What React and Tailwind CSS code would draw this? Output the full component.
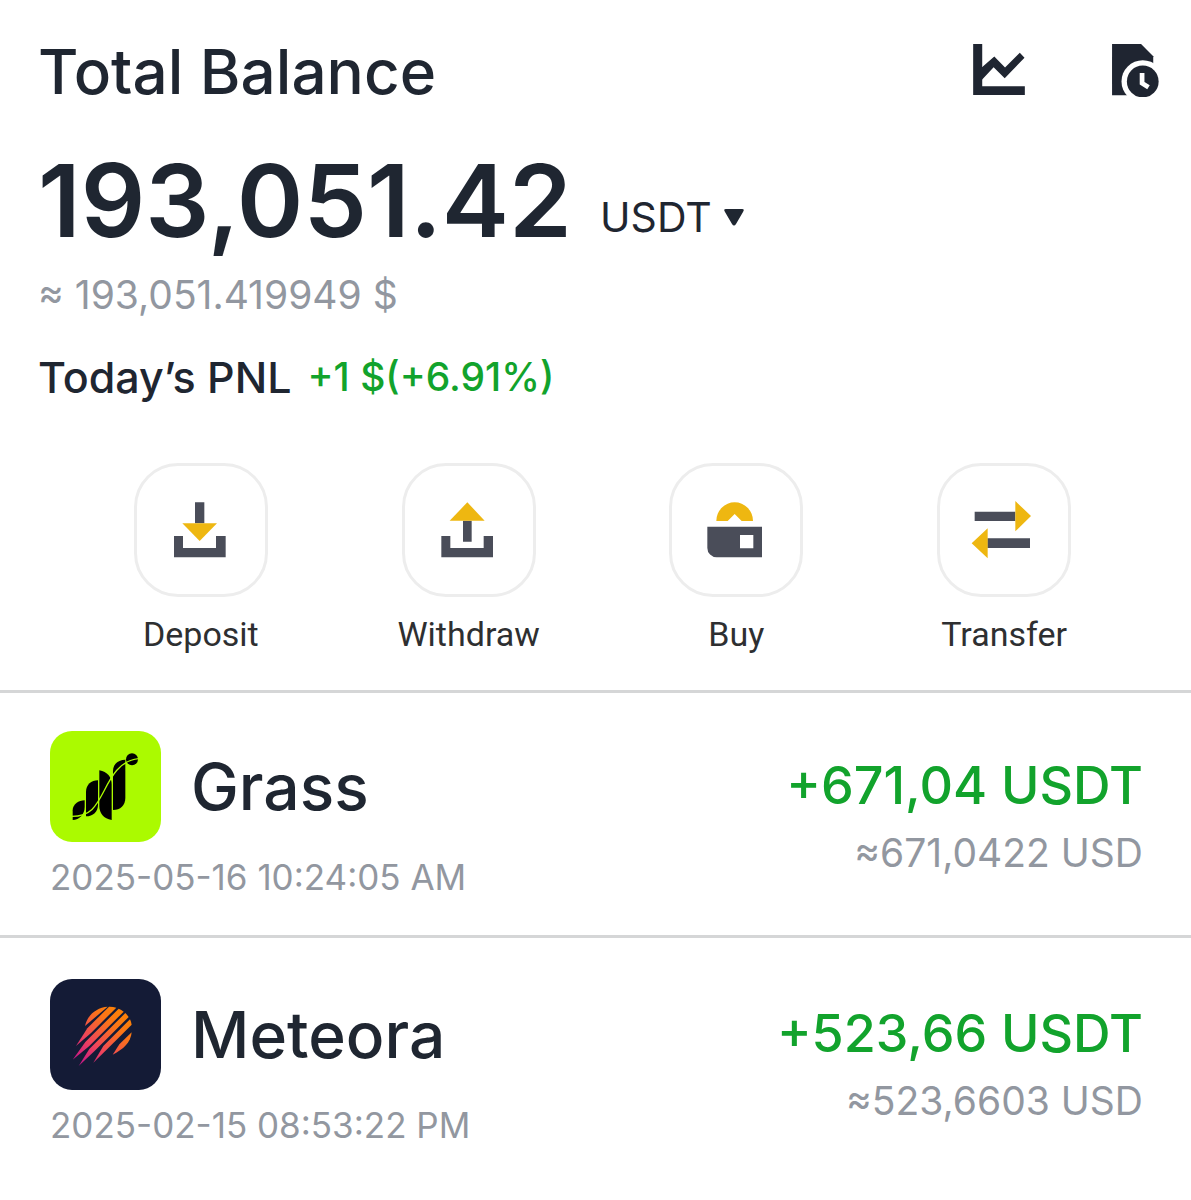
import React, { useState } from "react";

const ChartIcon = () => (
  <svg viewBox="0 0 154 152" className="h-[51px] w-[52px]" fill="#1f2531">
    <path d="M0 0h27v126h127v26H0z" />
    <path d="M22 73 63 37l32 33 44-44 14 15-59 61-33-33-39 42z" />
  </svg>
);

const HistoryIcon = () => (
  <svg viewBox="0 0 139 157" className="h-[53px] w-[47px]">
    <path d="M0 0h86l36 36v80L90 152H0z" fill="#1f2531" />
    <circle cx="91" cy="111" r="63" fill="#fff" />
    <circle cx="91" cy="111" r="47" fill="#1f2531" />
    <path d="M89 86v30l19 12" fill="none" stroke="#fff" strokeWidth="14" />
  </svg>
);

const DepositIcon = () => (
  <>
    <path d="M3 102h27v36h99v-36h29v64H3zM66 1h28v63H66z" fill="#4a4d59" />
    <path d="M28 64h104l-52 53z" fill="#eeb711" />
  </>
);

const WithdrawIcon = () => (
  <>
    <path d="M1 102h27v36h100v-36h28v64H1zM66 56h26v63H66z" fill="#4a4d59" />
    <path d="M26 56h105L79 1z" fill="#eeb711" />
  </>
);

const BuyIcon = () => (
  <>
    <path
      d="M-2 74h164v92H26a28 28 0 0 1-28-28zM96 99v40h40V99z"
      fill="#4a4d59"
      fillRule="evenodd"
    />
    <path d="M25 57a55 56 0 0 1 110 0h-34L80 36 59 57z" fill="#eeb711" />
  </>
);

const TransferIcon = () => (
  <>
    <path d="M-4 29h122v28H-4zM34 109h128v29H34z" fill="#4a4d59" />
    <path d="M118-3l47 45-47 46zM35 79l-48 45 48 45z" fill="#eeb711" />
  </>
);

const GrassLogo = () => (
  <svg viewBox="0 0 333 333" className="size-[111px] rounded-[22px] bg-[#abfa00]">
    <path d="M68 267v-29c0-18 18-30 36-30v20c0 22-16 39-36 39z" />
    <path d="M108 256v-73c0-22 16-35 36-35v73c0 21-15 35-36 35z" />
    <path d="M148 118c24 4 37 21 37 42v107c-24-4-37-20-37-42z" />
    <path d="M189 237V120c0-20 15-34 37-34v115c0 22-15 36-37 36z" />
    <circle cx="246" cy="85" r="18" />
    <path
      d="M66 256c56 0 72-30 96-76 21-42 47-92 104-97"
      fill="none"
      stroke="#abfa00"
      strokeWidth="4"
    />
  </svg>
);

const MeteoraLogo = () => (
  <svg viewBox="0 0 333 333" className="size-[111px] rounded-[22px] bg-[#141b36]">
    <defs>
      <linearGradient id="meteor" gradientUnits="userSpaceOnUse" x1="210" y1="105" x2="75" y2="255">
        <stop offset="0" stopColor="#fc8009" />
        <stop offset="0.2" stopColor="#fb7418" />
        <stop offset="0.6" stopColor="#ef445c" />
        <stop offset="1" stopColor="#c2108f" />
      </linearGradient>
    </defs>
    <g fill="url(#meteor)">
      <path d="M105 141C112 108 140 85 173 83z" />
      <path d="M78 201 112 148 177 83A64 64 0 0 1 199 86L124 161z" />
      <path d="M68 242 106 189 206 89A64 64 0 0 1 221 98L118 201z" />
      <path d="M86 261 118 210 226 102A64 64 0 0 1 236 114L136 214z" />
      <path d="M130 251 160 201 240 121A64 64 0 0 1 245 137L172 210z" />
      <path d="M188 227 208 196 245 160C242 190 222 210 188 227z" />
    </g>
  </svg>
);

const actions = [
  { label: "Deposit", icon: DepositIcon },
  { label: "Withdraw", icon: WithdrawIcon },
  { label: "Buy", icon: BuyIcon },
  { label: "Transfer", icon: TransferIcon },
];

const transactions = [
  {
    name: "Grass",
    logo: GrassLogo,
    date: "2025-05-16 10:24:05 AM",
    amount: "+671,04 USDT",
    value: "≈671,0422 USD",
  },
  {
    name: "Meteora",
    logo: MeteoraLogo,
    date: "2025-02-15 08:53:22 PM",
    amount: "+523,66 USDT",
    value: "≈523,6603 USD",
  },
];

const App = () => {
  const [currency, setCurrency] = useState("USDT");

  return (
    <main className="min-h-screen bg-white font-['Inter',sans-serif] text-[#1f2631]">
      <section className="border-b-3 border-[#d5d6d7] pt-9 pb-9">
        <header className="flex items-start justify-between pr-8 pl-[38px]">
          <h1 className="text-[62px] leading-[72px] font-medium">Total Balance</h1>
          <div className="flex items-start gap-[87px] pt-2">
            <button aria-label="Statistics">
              <ChartIcon />
            </button>
            <button aria-label="History">
              <HistoryIcon />
            </button>
          </div>
        </header>

        <div className="mt-[42px] flex items-end gap-7 px-[38px]">
          <p className="text-[101px] leading-[100px] font-semibold">193,051.42</p>
          <div className="flex items-center gap-3 pb-[9px]">
            <select
              aria-label="Currency"
              value={currency}
              onChange={(e) => setCurrency(e.target.value)}
              className="appearance-none bg-transparent text-[41px] leading-[48px] [field-sizing:content]"
            >
              <option>USDT</option>
            </select>
            <svg viewBox="0 0 20 17" className="h-[17px] w-5" fill="#1f2631">
              <path d="M2 0h16q3 0 1 3l-7 12q-2 3-4 0L1 3Q-1 0 2 0z" />
            </svg>
          </div>
        </div>

        <p className="mt-[21px] px-[38px] text-[39px] leading-[48px] text-[#9297a0]">
          ≈ 193,051.419949 $
        </p>
        <p className="mt-[34px] flex items-center gap-4 px-[38px] text-[43px] leading-[48px] font-medium">
          Today’s PNL
          <span className="text-[39px] text-[#12a32c]">+1 $(+6.91%)</span>
        </p>

        <div className="mt-[62px] grid grid-cols-4 pr-[53px] pl-[67px]">
          {actions.map(({ label, icon: Icon }) => (
            <button
              key={label}
              className="flex flex-col items-center gap-[17px] font-['Roboto',sans-serif] text-[34px] leading-10 text-[#2e2f31]"
            >
              <span className="flex size-[134px] items-center justify-center rounded-[44px] border-3 border-[#ededed]">
                <svg viewBox="0 0 168 168" className="size-14 overflow-visible">
                  <Icon />
                </svg>
              </span>
              {label}
            </button>
          ))}
        </div>
      </section>

      <ul className="divide-y-3 divide-[#d5d6d7]">
        {transactions.map(({ name, logo: Logo, date, amount, value }) => (
          <li
            key={name}
            className="flex justify-between pt-[41px] pr-12 pb-9 pl-[50px] first:pt-[38px]"
          >
            <div>
              <div className="flex items-center gap-[30px]">
                <Logo />
                <h2 className="text-[64px] leading-[72px] font-medium">{name}</h2>
              </div>
              <p className="mt-[13px] text-[35px] leading-[44px] text-[#9297a0]">{date}</p>
            </div>
            <div className="pt-6 text-right">
              <p className="text-[52px] leading-[62px] font-medium text-[#12a32c]">{amount}</p>
              <p className="mt-3 text-[39px] leading-[48px] text-[#9297a0]">{value}</p>
            </div>
          </li>
        ))}
      </ul>
    </main>
  );
};

export default App;
